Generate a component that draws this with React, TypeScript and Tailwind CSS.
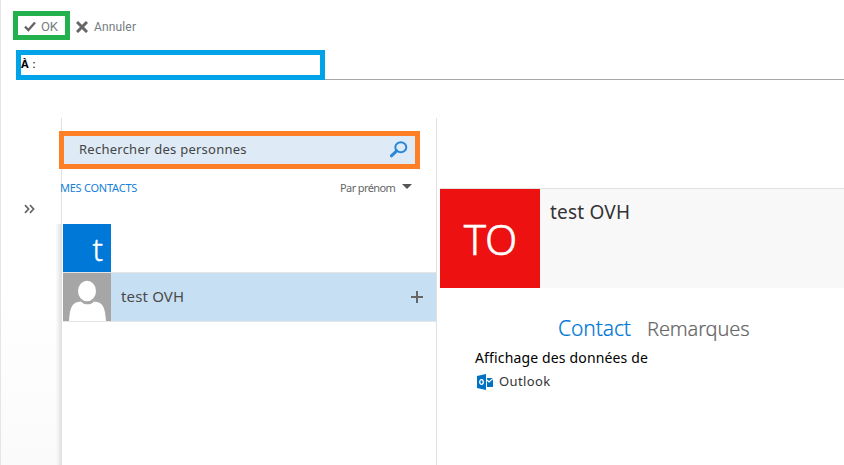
import React from "react";

function Toolbar() {
  return (
    <div className="flex h-[39px] items-start pl-3 pt-[11px] text-[12px] text-[#747c82] [font-family:Roboto,sans-serif]">
      <button className="flex h-[29px] w-[57px] items-center border-[5px] border-[#22b14c] pl-[6px] pt-[2px]">
        <svg width="12" height="11" viewBox="0 0 12 11" className="mr-[5px]">
          <path d="M1 5.6 4.4 9 11 1.5" fill="none" stroke="#666" strokeWidth="2.4" />
        </svg>
        <span className="text-[13px] leading-[16px] tracking-[-0.2px]">OK</span>
      </button>
      <button className="ml-[6px] flex h-[29px] items-center pt-[2px]">
        <svg width="12" height="12" viewBox="0 0 12 12" className="mr-[6px]">
          <path d="M1 1 11 11M11 1 1 11" fill="none" stroke="#666" strokeWidth="3" />
        </svg>
        <span className="leading-[16px] tracking-[0.15px]">Annuler</span>
      </button>
    </div>
  );
}

function Recipients() {
  return (
    <div className="mt-[11px] flex h-[30px] items-end pl-[15px]">
      <div className="h-[30px] w-[309px] border-[5px] border-[#00a2e8] text-[11px] leading-[17px] text-black">
        <b className="mr-px">À</b> :
      </div>
      <div className="h-px flex-1 bg-[#a6a6a6]" />
    </div>
  );
}

function Sidebar() {
  return (
    <aside className="flex w-[60px] flex-col">
      <div className="h-[106px] pl-[23px] pt-[86px]">
        <svg width="12" height="10" viewBox="0 0 12 10" fill="none" stroke="#666" strokeWidth="1.7">
          <path d="M1 1.2 4.6 5 1 8.8M6 1.2l3.6 3.8L6 8.8" />
        </svg>
      </div>
      <div className="flex flex-1">
        <div className="flex-1 bg-gradient-to-b from-white from-30% to-[#fafafa]" />
        <div className="w-[5px] bg-gradient-to-r from-[#fcfcfc] to-[#e2e2e2]" />
      </div>
    </aside>
  );
}

function ContactList() {
  return (
    <section className="w-[376px] border-r border-l border-[#e1e1e1]">
      <div className="relative -ml-[3px] mt-[13px] flex h-[38px] w-[361px] items-center border-[5px] border-[#ff7f27] bg-[#deebf7] pl-[15px]">
        <span className="text-[13px] tracking-[0.25px] text-[#444]">Rechercher des personnes</span>
        <svg width="20" height="18" viewBox="0 0 20 18" className="ml-auto mr-[6px] mt-[-1px]" fill="none" stroke="#2a88d9">
          <ellipse cx="11.8" cy="6.3" rx="5.5" ry="5" strokeWidth="2" />
          <path d="M7.7 9.9 2.4 14.8" strokeWidth="3" strokeLinecap="round" />
        </svg>
      </div>
      <div className="-ml-[2px] mt-[9px] flex h-5 items-center text-[11px]">
        <span className="w-[280px] tracking-[-0.24px] text-[#1581d8]">MES CONTACTS</span>
        <span className="w-[56px] tracking-[-0.6px] text-[#666]">Par prénom</span>
        <svg width="10" height="5" viewBox="0 0 10 5" className="mb-[4px] ml-[6px]">
          <path d="M0 0h10L5 5z" fill="#555" />
        </svg>
      </div>
      <div className="ml-px mt-[26px] flex h-12 w-12 justify-end bg-[#0078d7] pr-[8px] text-[31px] font-light leading-[50px] text-white [-webkit-text-stroke:0.4px_white]">
        t
      </div>
      <div className="ml-px flex h-[50px] items-center border-y border-[#e5e5e5] bg-[#c7dff3]">
        <div className="h-12 w-12 bg-[#a6a6a6]">
          <svg width="48" height="48" viewBox="0 0 48 48" fill="white">
            <ellipse cx="24" cy="18" rx="9" ry="10.3" />
            <path d="M6 48C7 34 9 29 18 28.5C21 32.3 28 32.3 31 28.5C40 29 42 34 43 48Z" />
          </svg>
        </div>
        <span className="ml-[10px] mt-[-2px] text-[15px] tracking-[0.15px] text-[#4a4a4a]">test OVH</span>
        <svg width="12" height="12" viewBox="0 0 12 12" className="ml-auto mr-[13px]">
          <path d="M5 0h2v5h5v2H7v5H5V7H0V5h5z" fill="#666" />
        </svg>
      </div>
    </section>
  );
}

function Details() {
  return (
    <section className="flex-1 pl-[3px] pt-[70px]">
      <div className="flex h-[100px] border-t border-[#e1e1e1] bg-[#f8f8f8]">
        <div className="flex w-[100px] items-center justify-center bg-[#ed1111] pl-px text-[42px] font-light leading-none text-white [-webkit-text-stroke:0.6px_white]">
          <span>TO</span>
        </div>
        <h1 className="ml-[10px] mt-[9px] text-[19px] leading-[28px] tracking-[0.2px] text-[#333]">test OVH</h1>
      </div>
      <nav className="ml-[118px] mt-[25px] flex h-[32px] items-center text-[21px] font-light text-[#666]">
        <span className="w-[89px] tracking-[-0.1px] text-[#0078d7] [-webkit-text-stroke:0.2px_#0078d7]">Contact</span>
        <span className="text-[20px] tracking-[-0.1px] [-webkit-text-stroke:0.2px_#666]">Remarques</span>
      </nav>
      <p className="ml-[35px] mt-[2px] text-[14px] leading-[22px] tracking-[0.15px] text-black">Affichage des données de</p>
      <div className="ml-[37px] mt-[3px] flex h-5 items-center">
        <svg width="16" height="16" viewBox="0 0 16 16">
          <path d="M0 2 9 0v16L0 14z" fill="#0072c6" />
          <ellipse cx="4.5" cy="8" rx="1.8" ry="2.3" fill="none" stroke="white" strokeWidth="1.3" />
          <path d="M10 4h6v9h-6z" fill="#0072c6" />
          <path d="m10 6 2 2 4-3.5" fill="none" stroke="white" strokeWidth="1.1" />
        </svg>
        <span className="ml-[6px] text-[13px] tracking-[0.4px] text-[#333]">Outlook</span>
      </div>
    </section>
  );
}

export default function App() {
  return (
    <main className="flex h-[465px] w-[844px] flex-col overflow-hidden whitespace-nowrap border-l border-[#e5e5e5] bg-white [font-family:'Noto_Sans',sans-serif]">
      <header className="h-[118px] shrink-0">
        <Toolbar />
        <Recipients />
      </header>
      <div className="flex min-h-0 flex-1">
        <Sidebar />
        <ContactList />
        <Details />
      </div>
    </main>
  );
}
